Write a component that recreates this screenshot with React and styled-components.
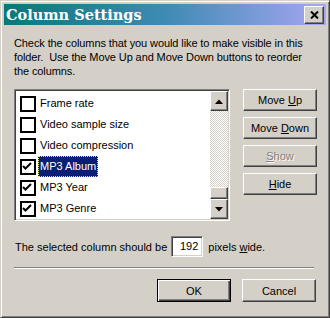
import React from "react";
import styled, { createGlobalStyle } from "styled-components";

const GlobalStyle = createGlobalStyle`
  html, body {
    margin: 0;
    padding: 0;
    background: #d4d0c8;
  }
  * {
    box-sizing: border-box;
  }
`;

const face = "#d4d0c8";

const Window = styled.div`
  width: 330px;
  height: 318px;
  background: ${face};
  border: 1px solid;
  border-color: ${face} #404040 #404040 ${face};
  box-shadow: inset 1px 1px #fff, inset -1px -1px #808080;
  padding: 3px;
  display: flex;
  flex-direction: column;
  font-family: "Liberation Sans", Arial, sans-serif;
  font-size: 11px;
  color: #000;
`;

const TitleBar = styled.div`
  height: 21px;
  display: flex;
  align-items: center;
  justify-content: space-between;
  padding: 0 2px;
  background: linear-gradient(to right, #0a7878 0%, #3f8ab4 50%, #a6a6f2 100%);
`;

const Title = styled.span`
  font-family: "DejaVu Serif", "Liberation Serif", serif;
  font-weight: bold;
  font-size: 14.5px;
  color: #fff;
`;

const Bevel = `
  background: ${face};
  border: 1px solid;
  border-color: #fff #404040 #404040 #fff;
  box-shadow: inset -1px -1px #808080;
`;

const CloseButton = styled.div`
  ${Bevel}
  width: 20px;
  height: 18px;
  display: flex;
  align-items: center;
  justify-content: center;
`;

const Content = styled.div`
  flex: 1;
  display: flex;
  flex-direction: column;
  padding: 11px 9px 0 10px;
`;

const Intro = styled.p`
  margin: 0;
  line-height: 14px;
  letter-spacing: -0.1px;
  white-space: nowrap;
`;

const Middle = styled.div`
  display: flex;
  gap: 13px;
  margin-top: 11px;
`;

const ListBox = styled.div`
  width: 216px;
  height: 132px;
  display: flex;
  background: #fff;
  border: 1px solid;
  border-color: #808080 #fff #fff #808080;
  box-shadow: inset 1px 1px #404040, inset -1px -1px ${face};
  padding: 1px;
`;

const Rows = styled.div`
  flex: 1;
  overflow: hidden;
  padding: 2px 0 0 4px;
`;

const Row = styled.div`
  height: 21px;
  display: flex;
  align-items: center;
`;

const Check = styled.span`
  width: 16px;
  height: 16px;
  border: 2px solid #000;
  background: #fff;
  margin-right: 2px;
  flex: none;
`;

const Label = styled.span`
  height: 21px;
  line-height: 21px;
  padding: 0 2px;
  white-space: nowrap;
  background: ${(p) => (p.selected ? "#0a1e78" : "transparent")};
  color: ${(p) => (p.selected ? "#fff" : "#000")};
  outline: ${(p) => (p.selected ? "1px dotted #e8e88a" : "none")};
  outline-offset: -1px;
`;

const Scrollbar = styled.div`
  width: 18px;
  display: flex;
  flex-direction: column;
`;

const ScrollButton = styled.div`
  ${Bevel}
  height: 20px;
  display: flex;
  align-items: center;
  justify-content: center;
`;

const Track = styled.div`
  flex: 1;
  background-color: #fff;
  background-image: conic-gradient(${face} 25%, #fff 0 50%, ${face} 0 75%, #fff 0);
  background-size: 2px 2px;
`;

const Thumb = styled.div`
  ${Bevel}
  height: 12px;
`;

const SideButtons = styled.div`
  display: flex;
  flex-direction: column;
  gap: 6px;
`;

const Button = styled.button`
  width: 74px;
  height: ${(p) => p.$h || 22}px;
  padding: 0;
  font-family: "Liberation Sans", Arial, sans-serif;
  font-size: 11px;
  background: ${face};
  border: 1px solid;
  border-color: #fff #404040 #404040 #fff;
  box-shadow: inset -1px -1px #808080;
  color: ${(p) => (p.disabled ? "#808080" : "#000")};
  text-shadow: ${(p) => (p.disabled ? "1px 1px #fff" : "none")};
`;

const DefaultButton = styled(Button)`
  border-color: #000;
  box-shadow: inset 1px 1px #fff, inset -1px -1px #404040, inset -2px -2px #808080;
`;

const WidthRow = styled.div`
  display: flex;
  align-items: center;
  margin-top: 15px;
  padding-left: 1px;
  white-space: pre;
`;

const NumberBox = styled.div`
  width: 32px;
  height: 21px;
  margin: 0 5px 0 4px;
  background: #fff;
  border: 1px solid;
  border-color: #808080 #fff #fff #808080;
  box-shadow: inset 1px 1px #404040, inset -1px -1px ${face};
  text-align: right;
  line-height: 19px;
  padding-right: 4px;
`;

const Separator = styled.div`
  height: 2px;
  margin: 10px 3px 0 0;
  border-top: 1px solid #808080;
  border-bottom: 1px solid #fff;
`;

const Footer = styled.div`
  display: flex;
  justify-content: flex-end;
  gap: 11px;
  margin: 10px 1px 0 0;
`;

const CheckMark = () => (
  <svg width="12" height="12" viewBox="0 0 12 12" style={{ display: "block" }}>
    <polyline points="1,5 3.5,7.5 9,2" fill="none" stroke="#000" strokeWidth="2" />
  </svg>
);

const Arrow = ({ down }) => (
  <svg width="8" height="5" viewBox="0 0 8 5">
    <polygon points={down ? "0,0 8,0 4,4.5" : "4,0.5 8,5 0,5"} fill="#000" />
  </svg>
);

const items = [
  { name: "Frame rate", checked: false },
  { name: "Video sample size", checked: false },
  { name: "Video compression", checked: false },
  { name: "MP3 Album", checked: true, selected: true },
  { name: "MP3 Year", checked: true },
  { name: "MP3 Genre", checked: true },
];

export default function App() {
  return (
    <>
      <GlobalStyle />
      <Window>
        <TitleBar>
          <Title>Column Settings</Title>
          <CloseButton>
            <svg width="9" height="8" viewBox="0 0 9 8">
              <path d="M1 0.5 L8 7.5 M8 0.5 L1 7.5" stroke="#000" strokeWidth="2" />
            </svg>
          </CloseButton>
        </TitleBar>
        <Content>
          <Intro>
            Check the columns that you would like to make visible in this
            <br />
            folder.&nbsp; Use the Move Up and Move Down buttons to reorder
            <br />
            the columns.
          </Intro>
          <Middle>
            <ListBox>
              <Rows>
                {items.map((it) => (
                  <Row key={it.name}>
                    <Check>{it.checked && <CheckMark />}</Check>
                    <Label selected={it.selected}>{it.name}</Label>
                  </Row>
                ))}
              </Rows>
              <Scrollbar>
                <ScrollButton>
                  <Arrow />
                </ScrollButton>
                <Track />
                <Thumb />
                <ScrollButton>
                  <Arrow down />
                </ScrollButton>
              </Scrollbar>
            </ListBox>
            <SideButtons>
              <Button>
                Move <u>U</u>p
              </Button>
              <Button>
                Move <u>D</u>own
              </Button>
              <Button disabled>
                <u>S</u>how
              </Button>
              <Button>
                <u>H</u>ide
              </Button>
            </SideButtons>
          </Middle>
          <WidthRow>
            <span>The selected column should be</span>
            <NumberBox>192</NumberBox>
            <span>
              pixels <u>w</u>ide.
            </span>
          </WidthRow>
          <Separator />
          <Footer>
            <DefaultButton $h={23}>OK</DefaultButton>
            <Button $h={23}>Cancel</Button>
          </Footer>
        </Content>
      </Window>
    </>
  );
}
